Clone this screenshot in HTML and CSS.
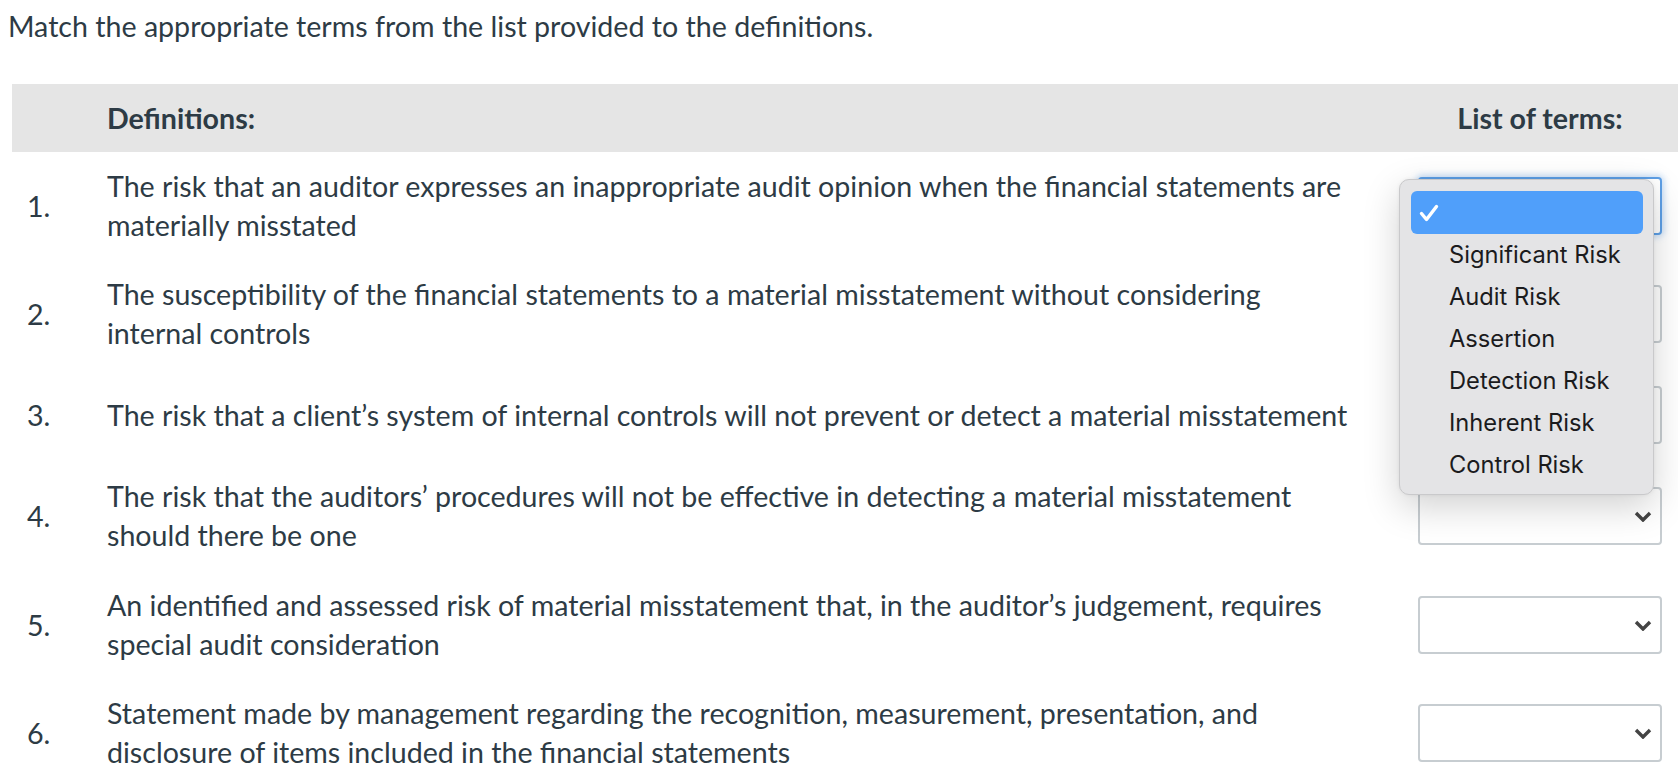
FILE: index.html
```html
<!DOCTYPE html>
<html lang="en">
<head>
<meta charset="utf-8">
<title>Matching question</title>
<link rel="stylesheet" href="styles.css">
</head>
<body>
<p class="prompt">Match the appropriate terms from the list provided to the definitions.</p>
<div class="match">
  <div class="match-head">
    <span></span>
    <span class="head-def">Definitions:</span>
    <span class="head-terms">List of terms:</span>
  </div>
  <div class="match-row">
    <span class="num">1.</span>
    <span class="def">The risk that an auditor expresses an inappropriate audit opinion when the financial statements are materially misstated</span>
    <div class="select focused"><svg class="chev" width="18" height="11" viewBox="0 0 18 11"><path d="M2 2l7 7 7-7" fill="none" stroke="#444" stroke-width="3.4"/></svg></div>
  </div>
  <div class="match-row">
    <span class="num">2.</span>
    <span class="def">The susceptibility of the financial statements to a material misstatement without considering internal controls</span>
    <div class="select"><svg class="chev" width="18" height="11" viewBox="0 0 18 11"><path d="M2 2l7 7 7-7" fill="none" stroke="#444" stroke-width="3.4"/></svg></div>
  </div>
  <div class="match-row">
    <span class="num">3.</span>
    <span class="def">The risk that a client’s system of internal controls will not prevent or detect a material misstatement</span>
    <div class="select"><svg class="chev" width="18" height="11" viewBox="0 0 18 11"><path d="M2 2l7 7 7-7" fill="none" stroke="#444" stroke-width="3.4"/></svg></div>
  </div>
  <div class="match-row">
    <span class="num">4.</span>
    <span class="def">The risk that the auditors’ procedures will not be effective in detecting a material misstatement should there be one</span>
    <div class="select"><svg class="chev" width="18" height="11" viewBox="0 0 18 11"><path d="M2 2l7 7 7-7" fill="none" stroke="#444" stroke-width="3.4"/></svg></div>
  </div>
  <div class="match-row">
    <span class="num">5.</span>
    <span class="def">An identified and assessed risk of material misstatement that, in the auditor’s judgement, requires special audit consideration</span>
    <div class="select"><svg class="chev" width="18" height="11" viewBox="0 0 18 11"><path d="M2 2l7 7 7-7" fill="none" stroke="#444" stroke-width="3.4"/></svg></div>
  </div>
  <div class="match-row">
    <span class="num">6.</span>
    <span class="def">Statement made by management regarding the recognition, measurement, presentation, and disclosure of items included in the financial statements</span>
    <div class="select"><svg class="chev" width="18" height="11" viewBox="0 0 18 11"><path d="M2 2l7 7 7-7" fill="none" stroke="#444" stroke-width="3.4"/></svg></div>
  </div>
</div>
<ul class="popup">
  <li class="opt checked"><svg class="check" width="20" height="20" viewBox="0 0 20 20"><path d="M2.5 10.5l5 6 10-13" fill="none" stroke="#fff" stroke-width="3.4" stroke-linecap="round" stroke-linejoin="round"/></svg></li>
  <li class="opt">Significant Risk</li>
  <li class="opt">Audit Risk</li>
  <li class="opt">Assertion</li>
  <li class="opt">Detection Risk</li>
  <li class="opt">Inherent Risk</li>
  <li class="opt">Control Risk</li>
</ul>
</body>
</html>
```
FILE: styles.css
```css
html, body {
  margin: 0;
  padding: 0;
  background: #fff;
  overflow: hidden;
}
body {
  font-family: "Lato", "Liberation Sans", sans-serif;
  color: #2d3b45;
  font-size: 28.6px;
  line-height: 39px;
  position: relative;
  width: 1678px;
  height: 782px;
}
.prompt {
  margin: 0;
  padding: 7px 0 0 8px;
}
.match {
  margin: 38px 0 0 12px;
}
.match-head {
  display: grid;
  grid-template-columns: 95px 1fr 244px;
  align-items: center;
  height: 68px;
  background: #e5e5e5;
  padding-right: 16px;
  font-weight: 700;
}
.head-terms {
  text-align: center;
}
.match-row {
  display: grid;
  grid-template-columns: 95px 1fr 244px;
  align-items: center;
  padding: 15px 16px 15px 0;
}
.match-row:nth-child(5) {
  padding-bottom: 16px;
}
.num {
  padding-left: 15px;
}
.def {
  padding-right: 62px;
}
.select {
  box-sizing: border-box;
  height: 58px;
  margin: 3px 0;
  border: 2px solid #c7cdd1;
  border-radius: 4px;
  background: #fff;
  display: flex;
  align-items: center;
  justify-content: flex-end;
  padding-right: 8px;
}
.select.focused {
  border-color: #5d9fe6;
  box-shadow: 0 0 6px 2px rgba(93, 159, 230, 0.35);
}
.popup {
  position: absolute;
  left: 1399px;
  top: 179px;
  width: 255px;
  height: 316px;
  box-sizing: border-box;
  margin: 0;
  padding: 11px 10px 8px 11px;
  list-style: none;
  background: #e4e4e6;
  border: 1px solid #c9c9cb;
  border-radius: 10px;
  box-shadow: 0 12px 36px rgba(0, 0, 0, 0.18), 0 0 4px rgba(0, 0, 0, 0.06);
  font-family: "Inter", "Liberation Sans", sans-serif;
  font-size: 23.7px;
  color: #1b1b1d;
}
.opt {
  height: 42px;
  line-height: 42px;
  padding-left: 38px;
  white-space: nowrap;
}
.opt.checked {
  height: 43px;
  background: #509ffa;
  border-radius: 6px;
  padding-left: 8px;
  display: flex;
  align-items: center;
}
```
